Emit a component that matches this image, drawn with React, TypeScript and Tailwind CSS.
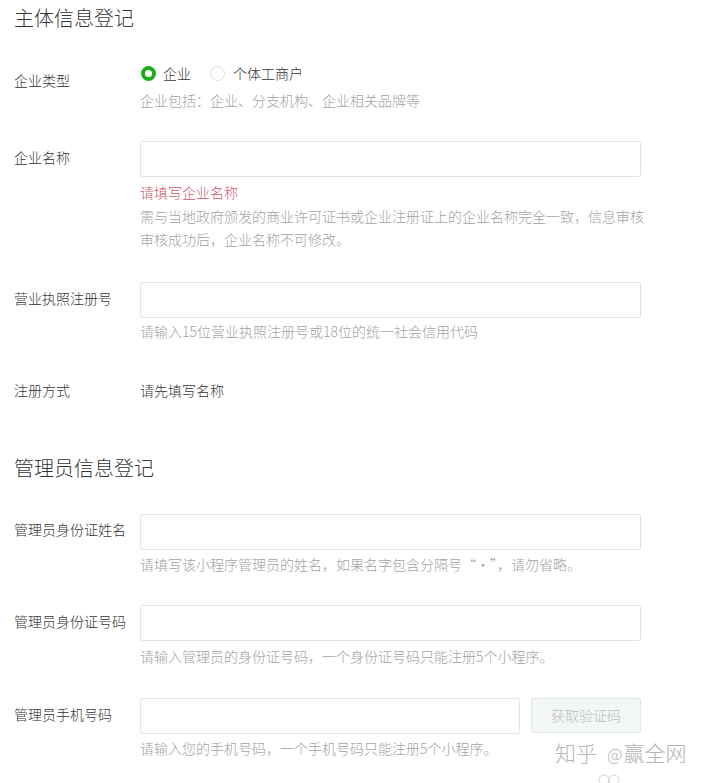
import React from "react";

const FONT = { fontFamily: '"Noto Sans CJK SC", "Noto Sans", sans-serif' };

function Label({ text, mt }: { text: string; mt: string }) {
    return (
        <div className={`w-[126px] shrink-0 text-[14px] leading-[22px] text-[#353535] ${mt}`}>{text}</div>
    );
}

function Input({ w = "w-[501px]" }: { w?: string }) {
    return <div className={`${w} h-[36px] border border-[#e4e4e4] rounded-[2px] bg-white`} />;
}

function Hint({ children, mt }: { children: React.ReactNode; mt: string }) {
    return <p className={`text-[14px] leading-[22px] text-[#a3a3a3] ${mt}`}>{children}</p>;
}

export default function App() {
    return (
        <div className="w-[704px] h-[783px] bg-white relative overflow-hidden pl-[14px] font-light" style={FONT}>
            {/* 主体信息登记 */}
            <h2 className="pt-[4px] text-[20px] leading-[28px] text-[#353535] font-light">主体信息登记</h2>

            <div className="flex mt-[30px]">
                <Label text="企业类型" mt="mt-[7px]" />
                <div>
                    <div className="flex items-center h-[22px] text-[14px] text-[#353535]">
                        <span className="w-[15px] h-[15px] rounded-full border-[4px] border-[#1aad19] mr-[7px] ml-[1px]" />
                        <span>企业</span>
                        <span className="w-[15px] h-[15px] rounded-full border border-[#dcdcdc] ml-[19px] mr-[8px]" />
                        <span>个体工商户</span>
                    </div>
                    <Hint mt="mt-[5px]">企业包括：企业、分支机构、企业相关品牌等</Hint>
                </div>
            </div>

            <div className="flex mt-[30px]">
                <Label text="企业名称" mt="mt-[5px]" />
                <div>
                    <Input />
                    <p className="mt-[4px] text-[14px] leading-[22px] text-[#cc5770]">请填写企业名称</p>
                    <p className="mt-[2px] text-[14px] leading-[23px] text-[#a3a3a3] whitespace-nowrap">
                        需与当地政府颁发的商业许可证书或企业注册证上的企业名称完全一致，信息审核
                        <br />
                        审核成功后，企业名称不可修改。
                    </p>
                </div>
            </div>

            <div className="flex mt-[31px]">
                <Label text="营业执照注册号" mt="mt-[5px]" />
                <div>
                    <Input />
                    <Hint mt="mt-[2px]">请输入15位营业执照注册号或18位的统一社会信用代码</Hint>
                </div>
            </div>

            <div className="flex mt-[37px] text-[14px] leading-[22px] text-[#353535]">
                <div className="w-[126px] shrink-0">注册方式</div>
                <div>请先填写名称</div>
            </div>

            {/* 管理员信息登记 */}
            <h2 className="mt-[53px] text-[20px] leading-[28px] text-[#353535] font-light">管理员信息登记</h2>

            <div className="flex mt-[32px]">
                <Label text="管理员身份证姓名" mt="mt-[4px]" />
                <div>
                    <Input />
                    <Hint mt="mt-[3px]">请填写该小程序管理员的姓名，如果名字包含分隔号“·”，请勿省略。</Hint>
                </div>
            </div>

            <div className="flex mt-[30px]">
                <Label text="管理员身份证号码" mt="mt-[5px]" />
                <div>
                    <Input />
                    <Hint mt="mt-[4px]">请输入管理员的身份证号码，一个身份证号码只能注册5个小程序。</Hint>
                </div>
            </div>

            <div className="flex mt-[31px]">
                <Label text="管理员手机号码" mt="mt-[5px]" />
                <div>
                    <div className="flex gap-[11px]">
                        <Input w="w-[380px]" />
                        <button className="w-[110px] h-[35px] rounded-[2px] border border-[#e2e9e5] bg-[#f2f6f4] text-[14px] text-[#bcbcbc]">
                            获取验证码
                        </button>
                    </div>
                    <Hint mt="mt-[3px]">请输入您的手机号码，一个手机号码只能注册5个小程序。</Hint>
                </div>
            </div>

            {/* watermark */}
            <div className="absolute left-[555px] top-[739px] flex items-baseline text-[21px] leading-[26px] text-[#b4b4b4] whitespace-nowrap">
                <span>知乎</span>
                <span className="ml-[10px] text-[17px]">@</span>
                <span className="ml-[1px]">赢全网</span>
            </div>
            <svg className="absolute left-[598px] top-[772px]" width="22" height="12" viewBox="0 0 22 12">
                <circle cx="6" cy="8" r="5" fill="none" stroke="#d4d4d4" strokeWidth="1" />
                <circle cx="16" cy="8" r="5" fill="none" stroke="#d4d4d4" strokeWidth="1" />
            </svg>
        </div>
    );
}
